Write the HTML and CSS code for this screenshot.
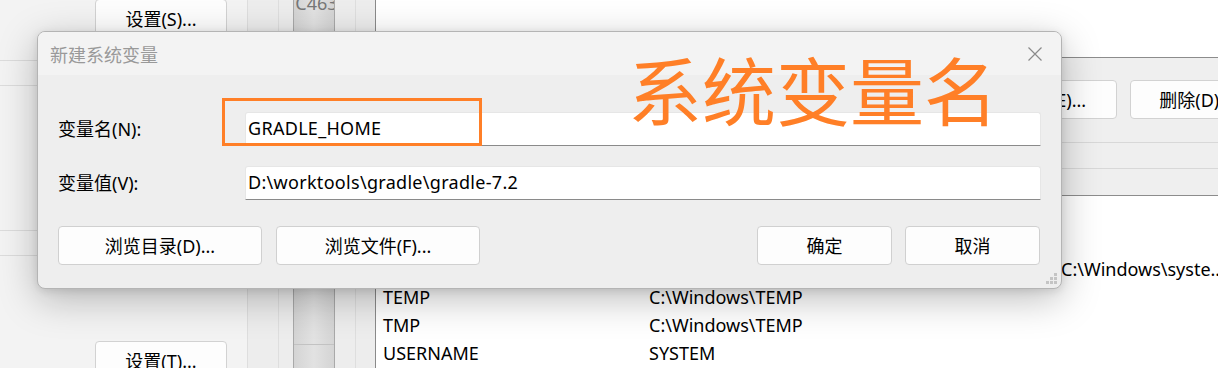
FILE: index.html
```html
<!DOCTYPE html>
<html lang="zh-CN">
<head>
  <meta charset="UTF-8" />
  <title>新建系统变量</title>
  <link rel="stylesheet" href="styles.css">
</head>
<body>
  <div class="desktop">
    <!-- 系统属性窗口（背后） -->
    <div class="sys-panel">
      <div class="btn btn-top">设置(S)...</div>
      <div class="panel-gap"></div>
      <div class="panel-line"></div>
      <div class="panel-gap2"></div>
      <div class="panel-line"></div>
      <div class="panel-gap3"></div>
      <div class="btn">设置(T)...</div>
    </div>

    <div class="strip"><div class="strip-line"></div></div>
    <div class="scroll-col">
      <div class="scroll-text">1C463</div>
      <div class="scroll-split"></div>
    </div>
    <div class="strip strip-narrow"><div class="strip-line"></div></div>

    <!-- 环境变量窗口 -->
    <div class="env">
      <div class="user-list"></div>
      <div class="btn-bar">
        <div class="btn-row">
          <div class="btn"></div>
          <div class="btn">编辑(E)...</div>
          <div class="btn">删除(D)...</div>
        </div>
        <div class="bar-line first"></div>
        <div class="bar-line"></div>
      </div>
      <div class="sys-list">
        <div class="row"></div>
        <div class="row"></div>
        <div class="row"><span class="name"></span><span class="value spill">C:\Windows\syste..</span></div>
        <div class="row"><span class="name">TEMP</span><span class="value">C:\Windows\TEMP</span></div>
        <div class="row"><span class="name">TMP</span><span class="value">C:\Windows\TEMP</span></div>
        <div class="row"><span class="name">USERNAME</span><span class="value">SYSTEM</span></div>
      </div>
    </div>
  </div>

  <!-- 对话框 -->
  <div class="dialog">
    <div class="title-bar">
      <span class="title">新建系统变量</span>
      <svg class="close" width="16" height="16" viewBox="0 0 16 16">
        <path d="M1.5 1.5 L14.5 14.5 M14.5 1.5 L1.5 14.5" stroke="#8a8a8a" stroke-width="1.2" fill="none"/>
      </svg>
    </div>
    <div class="dialog-body">
      <div class="field">
        <label>变量名(N):</label>
        <div class="input">GRADLE_HOME</div>
      </div>
      <div class="field">
        <label>变量值(V):</label>
        <div class="input">D:\worktools\gradle\gradle-7.2</div>
      </div>
      <div class="actions">
        <div class="group">
          <div class="dbtn wide">浏览目录(D)...</div>
          <div class="dbtn wide">浏览文件(F)...</div>
        </div>
        <div class="group">
          <div class="dbtn">确定</div>
          <div class="dbtn">取消</div>
        </div>
      </div>
    </div>
    <svg class="grip" width="12" height="12" viewBox="0 0 12 12">
      <rect x="8" y="0" width="3" height="3" fill="#c4c4c4"/>
      <rect x="4" y="4" width="3" height="3" fill="#c4c4c4"/>
      <rect x="8" y="4" width="3" height="3" fill="#c4c4c4"/>
      <rect x="0" y="8" width="3" height="3" fill="#c4c4c4"/>
      <rect x="4" y="8" width="3" height="3" fill="#c4c4c4"/>
      <rect x="8" y="8" width="3" height="3" fill="#c4c4c4"/>
    </svg>
  </div>

  <!-- 标注 -->
  <div class="mark-box"></div>
  <div class="mark-text">系统变量名</div>
</body>
</html>
```

FILE: styles.css
```css
html, body {
  margin: 0;
  padding: 0;
}

body {
  width: 1218px;
  height: 368px;
  overflow: hidden;
  position: relative;
  background: #ffffff;
  font-family: "Noto Sans", "Noto Sans CJK SC", sans-serif;
  font-size: 18px;
  color: #000;
}

.desktop {
  display: flex;
  height: 368px;
}

/* 左侧面板 */
.sys-panel {
  width: 247px;
  flex: none;
  background: #f3f3f3;
  display: flex;
  flex-direction: column;
  align-items: flex-start;
}

.btn {
  width: 132px;
  height: 40px;
  box-sizing: border-box;
  border: 1px solid #d2d2d2;
  border-radius: 4px;
  background: #fdfdfd;
  display: flex;
  align-items: center;
  justify-content: center;
  padding-bottom: 2px;
  flex: none;
  white-space: nowrap;
}

.sys-panel .btn { margin-left: 95px; }
.sys-panel .btn-top { margin-top: -1px; }

.panel-gap { height: 21px; flex: none; }
.panel-gap2 { height: 144px; flex: none; }
.panel-gap3 { height: 85px; flex: none; }

.panel-line {
  width: 100%;
  height: 26px;
  border-top: 1px solid #dcdcdc;
  border-bottom: 1px solid #dcdcdc;
  box-sizing: border-box;
  flex: none;
}

.strip {
  width: 46px;
  flex: none;
  background: #ededed;
  border-left: 1px solid #dedede;
  box-sizing: border-box;
  position: relative;
}

.strip-line {
  margin-left: 30px;
  width: 1px;
  height: 100%;
  background: #dedede;
}

.strip-narrow { width: 40px; border-left: none; }
.strip-narrow .strip-line { margin-left: 20px; }

.scroll-col {
  width: 42px;
  flex: none;
  background: linear-gradient(90deg, #d4d4d4, #e2e2e2 50%, #d4d4d4);
  border-left: 1px solid #a9a9a9;
  border-right: 1px solid #a9a9a9;
  box-sizing: border-box;
  overflow: hidden;
}

.scroll-text {
  color: #777;
  text-indent: -9px;
  line-height: 20px;
  margin-top: -7px;
  white-space: nowrap;
}

.scroll-split {
  margin-top: 331px;
  border-top: 1px solid #c2c2c2;
}

/* 环境变量窗口 */
.env {
  flex: 1;
  border-left: 1px solid #8a8a8a;
  display: flex;
  flex-direction: column;
  overflow: hidden;
}

.user-list {
  height: 57px;
  flex: none;
  background: #fff;
  border-bottom: 1px solid #8c8c8c;
}

.btn-bar {
  height: 138px;
  flex: none;
  background: #efefef;
  border-bottom: 1px solid #8c8c8c;
  padding-top: 22px;
  box-sizing: border-box;
}

.btn-row {
  display: flex;
  gap: 13px;
  padding-left: 462px;
}

.btn-row .btn { width: 133px; height: 39px; }

.bar-line {
  height: 25px;
  border-top: 1px solid #d8d8d8;
}

.bar-line.first { margin-top: 23px; }

.sys-list {
  padding-top: 3px;
  background: #fff;
}

.row {
  display: flex;
  height: 28px;
  align-items: center;
  padding-bottom: 1px;
  box-sizing: border-box;
  white-space: nowrap;
}

.row .name {
  width: 266px;
  padding-left: 7px;
  flex: none;
}

.row .value.spill { padding-left: 412px; }

/* 对话框 */
.dialog {
  position: absolute;
  left: 37px;
  top: 31px;
  width: 1025px;
  height: 258px;
  box-sizing: border-box;
  border: 1px solid #b4b4b4;
  border-radius: 8px;
  background: #eeeeee;
  box-shadow: 0 10px 38px rgba(0, 0, 0, 0.26), 0 2px 8px rgba(0, 0, 0, 0.1);
  overflow: hidden;
}

.title-bar {
  height: 43px;
  background: #f3f3f3;
  display: flex;
  align-items: center;
  justify-content: space-between;
  padding: 0 18px 0 12px;
}

.title {
  color: #999;
  font-family: "Noto Sans CJK SC", sans-serif;
  font-size: 18px;
}

.dialog-body {
  padding: 37px 20px 0 20px;
}

.field {
  display: flex;
  align-items: center;
  height: 34px;
  margin-bottom: 20px;
}

.field label {
  width: 187px;
  flex: none;
  padding-bottom: 3px;
}

.input {
  flex: 1;
  height: 34px;
  box-sizing: border-box;
  background: #fff;
  border: 1px solid #e6e6e6;
  border-bottom: 1px solid #8a8a8a;
  border-radius: 3px 3px 0 0;
  padding-left: 2px;
  padding-bottom: 3px;
  display: flex;
  align-items: center;
  letter-spacing: 0.3px;
}

.actions {
  display: flex;
  justify-content: space-between;
  margin-top: 26px;
  padding-right: 1px;
}

.group {
  display: flex;
  gap: 13px;
}

.group:first-child { gap: 14px; }

.dbtn {
  width: 135px;
  height: 39px;
  box-sizing: border-box;
  border: 1px solid #d0d0d0;
  border-radius: 4px;
  background: #fdfdfd;
  display: flex;
  align-items: center;
  justify-content: center;
  padding-bottom: 2px;
}

.dbtn.wide { width: 204px; }

.grip {
  position: absolute;
  right: 3px;
  bottom: 3px;
}

/* 橙色标注 */
.mark-box {
  position: absolute;
  left: 222px;
  top: 98px;
  width: 260px;
  height: 48px;
  box-sizing: border-box;
  border: 3px solid #ff7f27;
}

.mark-text {
  position: absolute;
  left: 628px;
  top: 46px;
  font-family: "Noto Sans CJK SC", sans-serif;
  font-size: 74px;
  line-height: 84px;
  color: #ff7f27;
  white-space: nowrap;
}
```
